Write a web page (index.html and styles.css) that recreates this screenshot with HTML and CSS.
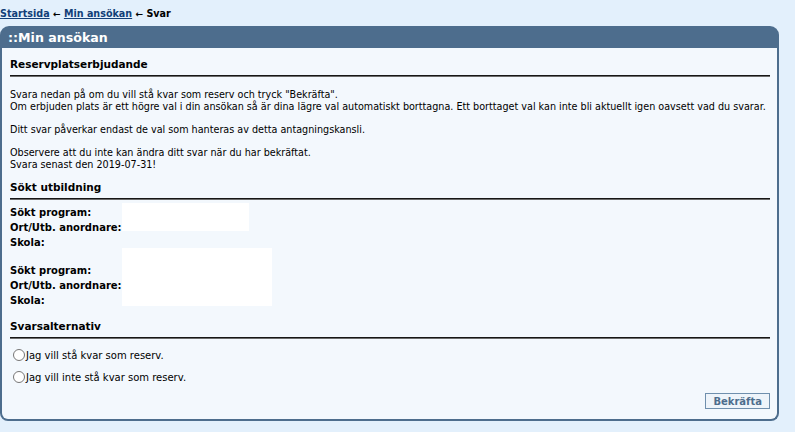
FILE: index.html
```html
<!DOCTYPE html>
<html lang="sv">
<head>
  <meta charset="UTF-8">
  <title>Min ansökan - Svar</title>
  <link rel="stylesheet" href="styles.css">
</head>
<body>
  <div class="crumbs">
    <a href="#">Startsida</a> <span class="arrow">&larr;</span>
    <a href="#">Min ansökan</a> <span class="arrow">&larr;</span>
    <span>Svar</span>
  </div>

  <div class="panel">
    <div class="panel-head">::Min ansökan</div>
    <div class="panel-body">
      <h3 class="section">Reservplatserbjudande</h3>
      <div class="info">
        <p>Svara nedan på om du vill stå kvar som reserv och tryck "Bekräfta".<br>
        Om erbjuden plats är ett högre val i din ansökan så är dina lägre val automatiskt borttagna. Ett borttaget val kan inte bli aktuellt igen oavsett vad du svarar.</p>
        <p>Ditt svar påverkar endast de val som hanteras av detta antagningskansli.</p>
        <p>Observere att du inte kan ändra ditt svar när du har bekräftat.<br>
        Svara senast den 2019-07-31!</p>
      </div>

      <h3 class="section">Sökt utbildning</h3>
      <div class="choice">
        <div class="labels">
          <div>Sökt program:</div>
          <div>Ort/Utb. anordnare:</div>
          <div>Skola:</div>
        </div>
        <div class="hidden-value first"></div>
      </div>
      <div class="choice">
        <div class="labels second">
          <div>Sökt program:</div>
          <div>Ort/Utb. anordnare:</div>
          <div>Skola:</div>
        </div>
        <div class="hidden-value second"></div>
      </div>

      <h3 class="section">Svarsalternativ</h3>
      <div class="options">
        <label class="option"><input type="radio" name="svar">Jag vill stå kvar som reserv.</label>
        <label class="option"><input type="radio" name="svar">Jag vill inte stå kvar som reserv.</label>
      </div>

      <div class="actions">
        <button class="confirm">Bekräfta</button>
      </div>
    </div>
  </div>
</body>
</html>
```

FILE: styles.css
```css
body {
  font-family: "DejaVu Sans Condensed", "DejaVu Sans", sans-serif;
  font-size: 10.7px;
  background-color: #e3f0fc;
  margin: 0;
  padding: 8px 0 0 0;
  color: #000;
}

.crumbs {
  font-family: "DejaVu Sans", sans-serif;
  font-weight: bold;
  font-size: 9.6px;
  height: 18px;
}

.crumbs a {
  color: #123f78;
}

.crumbs .arrow {
  font-size: 9px;
}

.panel {
  width: 779px;
}

.panel-head {
  background-color: #4d6d8d;
  color: #fff;
  font-family: "DejaVu Sans", sans-serif;
  font-size: 12.6px;
  font-weight: bold;
  height: 22px;
  line-height: 24px;
  padding-left: 8px;
  border-radius: 9px 9px 0 0;
}

.panel-body {
  background-color: #f3f8fd;
  border: 2px solid #4d6d8d;
  border-top: none;
  border-radius: 0 0 8px 8px;
  padding: 8px 7px 10px 8px;
}

.section {
  font-family: "DejaVu Sans", sans-serif;
  font-size: 10.5px;
  margin: 0 0 3px 0;
  padding: 2px 0 5px 0;
  border-bottom: 2px groove #6b6b6b;
}

.info {
  line-height: 12px;
  padding-top: 9px;
}

.info p {
  margin: 0 0 11px 0;
}

.info p:last-child {
  margin-bottom: 8px;
}

.choice {
  display: flex;
  align-items: flex-start;
}

.choice + .choice {
  margin-top: -2px;
}

.labels {
  font-family: "DejaVu Sans", sans-serif;
  font-size: 10px;
  font-weight: bold;
  width: 112px;
  line-height: 15px;
  padding-top: 2px;
}

.labels.second {
  padding-top: 15px;
}

.hidden-value {
  background-color: #fff;
}

.hidden-value.first {
  width: 127px;
  height: 28px;
}

.hidden-value.second {
  width: 150px;
  height: 58px;
}

.choice + .section {
  margin-top: 10px;
}

.options {
  padding-top: 2px;
}

.option {
  display: flex;
  align-items: center;
  height: 22px;
  font-family: "DejaVu Sans", sans-serif;
  font-size: 10px;
}

.option input {
  margin: 0 1px 0 3px;
  width: 12px;
  height: 12px;
}

.actions {
  display: flex;
  justify-content: flex-end;
  padding: 5px 0 0 0;
}

.confirm {
  font-family: "DejaVu Sans", sans-serif;
  font-size: 10px;
  font-weight: bold;
  color: #4d6d8d;
  background-color: #eef4fa;
  border: 1px solid #6f8fad;
  padding: 0 7px;
  height: 16px;
}
```
